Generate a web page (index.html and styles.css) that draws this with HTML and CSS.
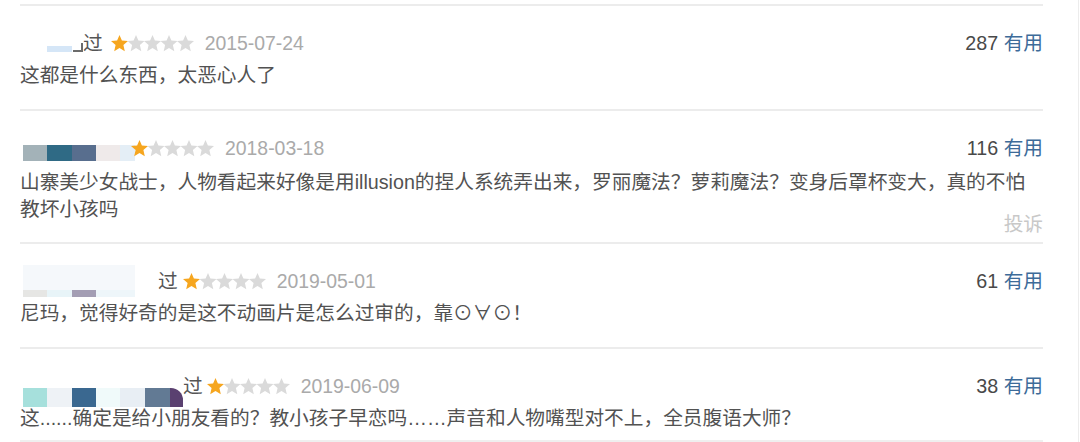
FILE: index.html
```html
<!DOCTYPE html>
<html lang="zh-CN">
<head>
<meta charset="utf-8">
<title>短评</title>
<link rel="stylesheet" href="styles.css">
</head>
<body>
<div class="page">
  <div class="list">
    <div class="review r1">
      <div class="meta">
        <div class="left">
          <span class="mosaic m1"><span class="frag"></span></span>
          <span class="name">过</span>
          <span class="stars"><svg viewBox="0 0 84 17" width="84" height="17"><use href="#s" x="0" class="on"/><use href="#s" x="16.5"/><use href="#s" x="33"/><use href="#s" x="49.5"/><use href="#s" x="66"/></svg></span>
          <span class="date">2015-07-24</span>
        </div>
        <div class="vote"><span class="count">287</span> <span class="useful">有用</span></div>
      </div>
      <p class="text">这都是什么东西，太恶心人了</p>
    </div>

    <div class="review r2">
      <div class="meta">
        <div class="left">
          <span class="mosaic m2"></span>
          <span class="stars"><svg viewBox="0 0 84 17" width="84" height="17"><use href="#s" x="0" class="on"/><use href="#s" x="16.5"/><use href="#s" x="33"/><use href="#s" x="49.5"/><use href="#s" x="66"/></svg></span>
          <span class="date">2018-03-18</span>
        </div>
        <div class="vote"><span class="count">116</span> <span class="useful">有用</span></div>
      </div>
      <p class="text">山寨美少女战士，人物看起来好像是用illusion的捏人系统弄出来，罗丽魔法？萝莉魔法？变身后罩杯变大，真的不怕教坏小孩吗</p>
      <div class="report">投诉</div>
    </div>

    <div class="review r3">
      <div class="meta">
        <div class="left">
          <span class="mosaic m3"></span>
          <span class="name">过</span>
          <span class="stars"><svg viewBox="0 0 84 17" width="84" height="17"><use href="#s" x="0" class="on"/><use href="#s" x="16.5"/><use href="#s" x="33"/><use href="#s" x="49.5"/><use href="#s" x="66"/></svg></span>
          <span class="date">2019-05-01</span>
        </div>
        <div class="vote"><span class="count">61</span> <span class="useful">有用</span></div>
      </div>
      <p class="text">尼玛，觉得好奇的是这不动画片是怎么过审的，靠⊙∀⊙！</p>
    </div>

    <div class="review r4">
      <div class="meta">
        <div class="left">
          <span class="mosaic m4"></span>
          <span class="name">过</span>
          <span class="stars"><svg viewBox="0 0 84 17" width="84" height="17"><use href="#s" x="0" class="on"/><use href="#s" x="16.5"/><use href="#s" x="33"/><use href="#s" x="49.5"/><use href="#s" x="66"/></svg></span>
          <span class="date">2019-06-09</span>
        </div>
        <div class="vote"><span class="count">38</span> <span class="useful">有用</span></div>
      </div>
      <p class="text">这......确定是给小朋友看的？教小孩子早恋吗……声音和人物嘴型对不上，全员腹语大师？</p>
    </div>
  </div>
</div>
<svg class="defs" width="0" height="0">
  <defs>
    <path id="s" d="M8.5 0 L10.9 5.6 L17 6.1 L12.4 10.1 L13.8 16.2 L8.5 13 L3.2 16.2 L4.6 10.1 L0 6.1 L6.1 5.6 Z"/>
  </defs>
</svg>
</body>
</html>
```

FILE: styles.css
```css
html, body {
  margin: 0;
  padding: 0;
  background: #ffffff;
}

body {
  font-family: "Liberation Sans", "Noto Sans CJK SC", Arial, sans-serif;
  font-size: 19.7px;
  color: #525252;
}

.page {
  width: 1078px;
  height: 442px;
  border-right: 1px solid #ececec;
  overflow: hidden;
}

.list {
  padding: 4px 0 0 20px;
  width: 1023px;
}

.review {
  border-top: 2px solid #ececec;
  padding: 24px 0 20px;
}

.r2 { padding-bottom: 17px; }
.r4 { border-bottom: 2px solid #efefef; padding-bottom: 8px; }

.meta {
  display: flex;
  justify-content: space-between;
  align-items: center;
  height: 27px;
  line-height: 27px;
}

.left {
  display: flex;
  align-items: center;
  height: 27px;
}

.name {
  color: #555555;
}

.stars {
  display: flex;
  margin-left: 8px;
  width: 84px;
}

.stars svg use { fill: #dadada; }
.stars svg use.on { fill: #f6a61f; }

.date {
  color: #aaaaaa;
  margin-left: 10px;
  font-size: 19.4px;
}

.vote {
  white-space: nowrap;
}

.count { color: #494949; }
.useful { color: #3d6b99; }

.text {
  margin: 5px 0 0;
  line-height: 27px;
  color: #525252;
}

.r2 .text { margin-top: 7px; }

.report {
  text-align: right;
  color: #c8c8c8;
  line-height: 2px;
  height: 2px;
  margin-left: auto;
  width: max-content;
}

/* pixelated usernames */
.mosaic {
  display: block;
  flex: none;
}

.m1 {
  width: 63px;
  height: 6px;
  align-self: flex-start;
  margin-top: 16px;
  background: linear-gradient(to right, transparent 0 27px, #d5e6f7 27px 52px, transparent 52px);
  position: relative;
}

.m1 .frag {
  position: absolute;
  right: 0;
  bottom: 0;
  width: 10px;
  height: 9px;
  border-right: 2px solid #6b6b6b;
  border-bottom: 2px solid #6b6b6b;
  box-sizing: border-box;
}

.m2 {
  width: 112px;
  height: 16px;
  margin-left: 3px;
  align-self: flex-start;
  margin-top: 10px;
  background: linear-gradient(to right,
    #a3b2b8 0 24px, #2f6a85 24px 49px, #586e8e 49px 73px,
    #efeaea 73px 97px, #e4eef6 97px 112px);
}

.m3 {
  width: 112px;
  height: 32px;
  margin-left: 3px;
  margin-right: 23px;
  align-self: flex-start;
  margin-top: -3px;
  background:
    linear-gradient(to right,
      #e6e6e4 0 24px, #e8f4f8 24px 49px, #a49eb4 49px 73px, #eef6fa 73px 112px)
      left bottom / 100% 7px no-repeat,
    #f5f8fb;
}

.m4 {
  width: 160px;
  height: 19px;
  margin-left: 3px;
  align-self: flex-start;
  margin-top: 15px;
  border-top-right-radius: 12px;
  background: linear-gradient(to right,
    #a6e0dc 0 24px, #eef2f6 24px 49px, #3a6890 49px 73px,
    #f0fafa 73px 97px, #e8eef4 97px 122px, #627a94 122px 147px,
    #5a4070 147px 160px);
}

.r2 .stars { margin-left: -4px; }
.r3 .stars { margin-left: 5px; }
.r4 .stars { margin-left: 4px; }

.defs {
  position: absolute;
  width: 0;
  height: 0;
}
```
